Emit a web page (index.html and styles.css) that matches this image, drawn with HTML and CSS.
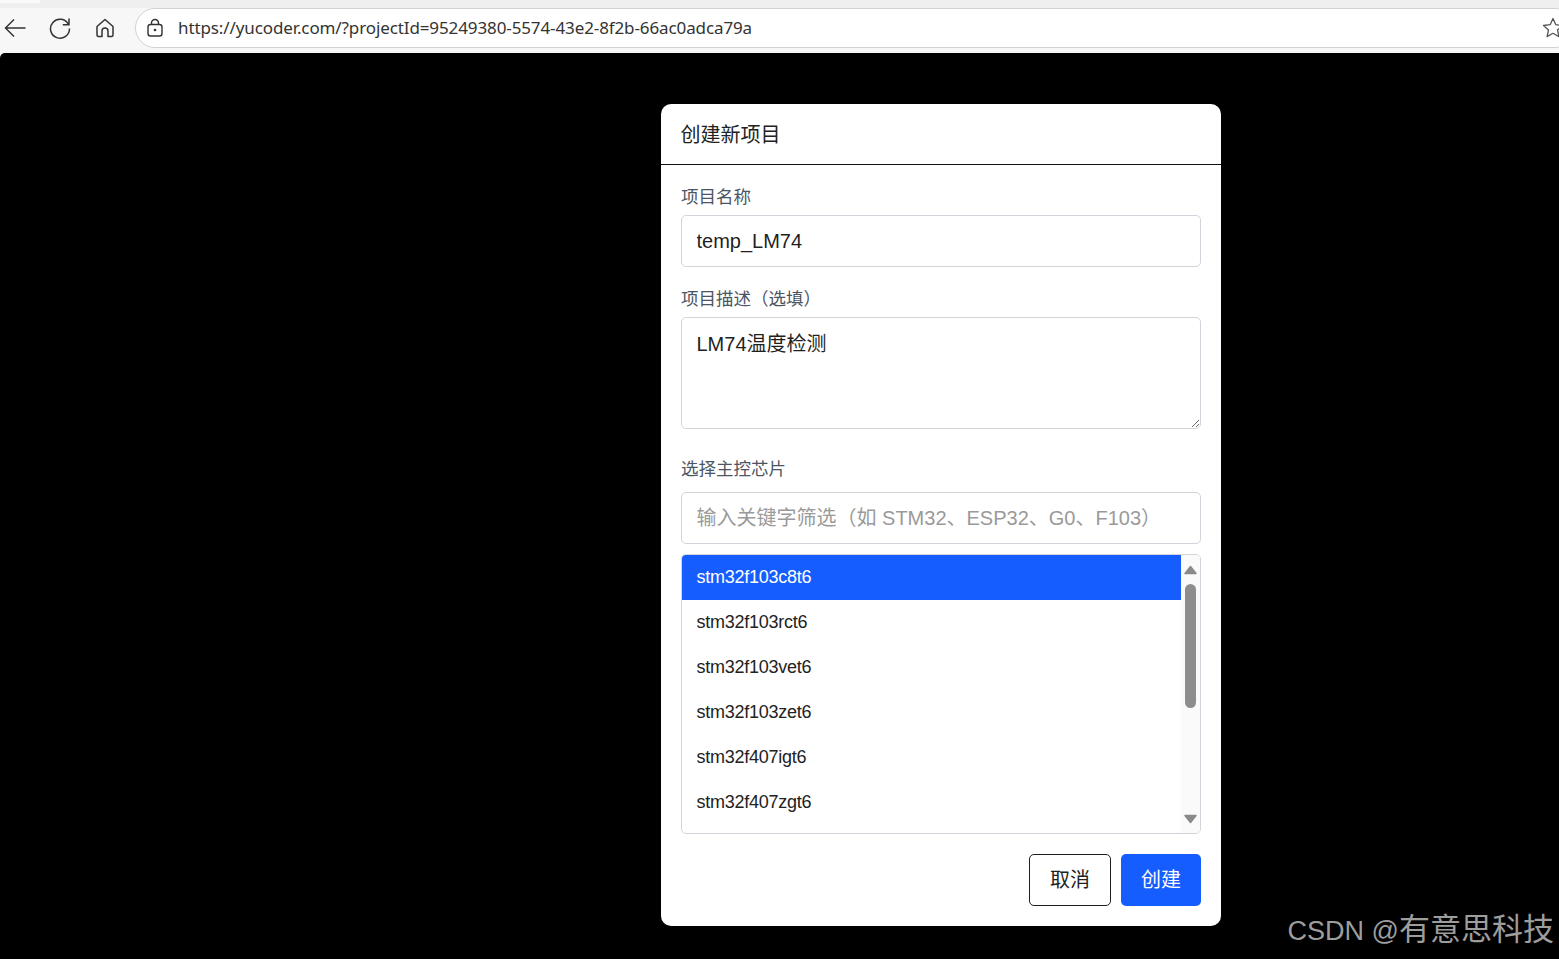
FILE: index.html
```html
<!DOCTYPE html>
<html lang="zh-CN">
<head>
<meta charset="utf-8">
<title>创建新项目</title>
<link rel="stylesheet" href="styles.css">
</head>
<body>
<header class="browser">
  <div class="tabstrip"><span class="tab"></span></div>
  <div class="toolbar">
    <svg class="icon back" width="24" height="24" viewBox="0 0 24 24"><path d="M22.500 12H2.500M11 3.500 2.500 12l8.500 8.500" fill="none" stroke="#333" stroke-width="1.500"/></svg>
    <svg class="icon reload" width="24" height="24" viewBox="0 0 24 24"><path d="M20.500 8.500A9.500 9.500 0 1 0 21.500 12.500M21 2.500V8.700H14.800" fill="none" stroke="#333" stroke-width="1.500"/></svg>
    <svg class="icon home" width="22" height="22" viewBox="0 0 22 22"><path d="M11 2.500 3 9.500v8.500a1.500 1.500 0 0 0 1.500 1.500H8v-5.500a3 3 0 0 1 6 0v5.500h3.500A1.500 1.500 0 0 0 19 18V9.500Z" fill="none" stroke="#333" stroke-width="1.500" stroke-linejoin="round"/></svg>
    <div class="address">
      <svg class="lock" width="18" height="20" viewBox="0 0 18 20"><rect x="2" y="6.500" width="14" height="11.500" rx="2.500" fill="none" stroke="#333" stroke-width="1.400"/><path d="M5.500 6.500V5a3.500 3.500 0 0 1 7 0v1.500" fill="none" stroke="#333" stroke-width="1.400"/><circle cx="9" cy="12" r="1.300" fill="#333"/></svg>
      <span class="url">https://yucoder.com/?projectId=95249380-5574-43e2-8f2b-66ac0adca79a</span>
      <svg class="star" width="24" height="24" viewBox="0 0 24 24"><path d="M12 2.500l2.800 6.200 6.700.8-5 4.500 1.400 6.600L12 17.300l-5.900 3.300 1.400-6.600-5-4.500 6.700-.8Z" fill="none" stroke="#555" stroke-width="1.300" stroke-linejoin="round"/></svg>
    </div>
  </div>
</header>
<main class="stage">
  <section class="modal">
    <h1 class="modal-title">创建新项目</h1>
    <div class="modal-body">
      <label class="label label-name">项目名称</label>
      <input class="field" type="text" value="temp_LM74">
      <label class="label label-desc">项目描述（选填）</label>
      <textarea class="field area">LM74温度检测</textarea>
      <label class="label label-chip">选择主控芯片</label>
      <input class="field" type="text" placeholder="输入关键字筛选（如 STM32、ESP32、G0、F103）">
      <div class="list">
        <ul class="options">
          <li class="option selected">stm32f103c8t6</li>
          <li class="option">stm32f103rct6</li>
          <li class="option">stm32f103vet6</li>
          <li class="option">stm32f103zet6</li>
          <li class="option">stm32f407igt6</li>
          <li class="option">stm32f407zgt6</li>
        </ul>
        <div class="scrollbar">
          <svg class="arrow" width="13" height="10" viewBox="0 0 13 10"><path d="M6.500 1.500 12 8.500H1Z" fill="#8a8a8a" stroke="#8a8a8a" stroke-width="1.500" stroke-linejoin="round"/></svg>
          <span class="thumb"></span>
          <svg class="arrow arrow-down" width="13" height="10" viewBox="0 0 13 10"><path d="M6.500 8.500 12 1.500H1Z" fill="#8a8a8a" stroke="#8a8a8a" stroke-width="1.500" stroke-linejoin="round"/></svg>
        </div>
      </div>
      <div class="actions">
        <button class="btn cancel" type="button">取消</button>
        <button class="btn primary" type="button">创建</button>
      </div>
    </div>
  </section>
  <div class="watermark"><span class="wm-latin">CSDN @</span>有意思科技</div>
</main>
</body>
</html>
```
FILE: styles.css
```css
* { box-sizing: border-box; }
html, body { height: 100%; }
body {
  margin: 0;
  overflow: hidden;
  display: flex;
  flex-direction: column;
  background: #f7f7f7;
  font-family: "Liberation Sans", "Noto Sans CJK SC", sans-serif;
  color: #1f1f1f;
}
.browser { height: 53px; flex: none; background: #f7f7f7; overflow: hidden; }
.tabstrip { height: 8px; background: #efefef; }
.tab { display: block; width: 40px; height: 3px; background: #fafafa; }
.toolbar { display: flex; align-items: center; height: 39px; padding-left: 3px; }
.icon { flex: none; }
.back { margin-right: 21px; }
.reload { margin-right: 22px; }
.home { margin-right: 19px; }
.address {
  flex: none;
  display: flex;
  align-items: center;
  width: 1440px;
  height: 40px;
  padding-left: 10px;
  background: #fff;
  border: 1px solid #d2d2d2;
  border-radius: 20px;
}
.lock { flex: none; margin-right: 14px; }
.url { font-family: "Noto Sans", sans-serif; font-size: 17px; color: #333; white-space: nowrap; letter-spacing: -0.11px; }
.star { flex: none; margin-left: 789px; }
.stage { flex: 1; position: relative; padding: 51px 0 0 661px; background: #000; border-top-left-radius: 5px; }
.modal { width: 560px; height: 822px; background: #fff; border-radius: 10px; }
.modal-title {
  margin: 0;
  height: 61px;
  padding: 0 19.500px;
  font-size: 20px;
  line-height: 62px;
  font-weight: 400;
  color: #222;
  border-bottom: 1px solid #111;
}
.modal-body { display: flex; flex-direction: column; padding: 0 20px; }
.label { display: block; font-size: 17.500px; line-height: 24px; color: #4b5563; }
.label-name { margin-top: 20px; margin-bottom: 6px; }
.label-desc { margin-top: 20px; margin-bottom: 6px; }
.label-chip { margin-top: 28px; margin-bottom: 11px; }
.field {
  display: block;
  width: 520px;
  height: 52px;
  padding: 0 14.500px;
  font: 20px "Liberation Sans", "Noto Sans CJK SC", sans-serif;
  color: #1f1f1f;
  background: #fff;
  border: 1px solid #d1d5db;
  border-radius: 5px;
  outline: none;
}
.field::placeholder { color: #9a9a9a; opacity: 1; }
.area { height: 112px; padding: 12px 14.500px 10px; line-height: 28px; resize: vertical; margin: 0; }
.list {
  display: flex;
  height: 280px;
  margin-top: 10px;
  border: 1px solid #d1d5db;
  border-radius: 5px;
  overflow: hidden;
}
.options { flex: 1; margin: 0; padding: 0; list-style: none; }
.option { height: 45px; padding-left: 14.500px; font-size: 18px; line-height: 45px; color: #222; letter-spacing: -0.25px; }
.option.selected { background: #165dff; color: #fff; }
.scrollbar {
  flex: none;
  width: 19px;
  display: flex;
  flex-direction: column;
  align-items: center;
  background: #fafafa;
  padding: 10px 0 9px;
}
.arrow { flex: none; }
.arrow-down { margin-top: auto; }
.thumb { width: 11px; height: 124px; margin-top: 9px; border-radius: 6px; background: #8d8d8d; }
.actions { display: flex; justify-content: flex-end; gap: 10px; margin-top: 20px; }
.btn { height: 52px; font: 20px/50px "Liberation Sans", "Noto Sans CJK SC", sans-serif; border-radius: 5px; cursor: pointer; padding: 0; }
.cancel { width: 82px; background: #fff; color: #222; border: 1px solid #1f1f1f; }
.primary { width: 80px; background: #165dff; color: #fff; border: 0; }
.watermark {
  position: absolute;
  right: 5px;
  bottom: 11px;
  font-size: 31px;
  line-height: 34px;
  color: #9d9d9d;
  white-space: nowrap;
}
.wm-latin { font-size: 27px; }
```
